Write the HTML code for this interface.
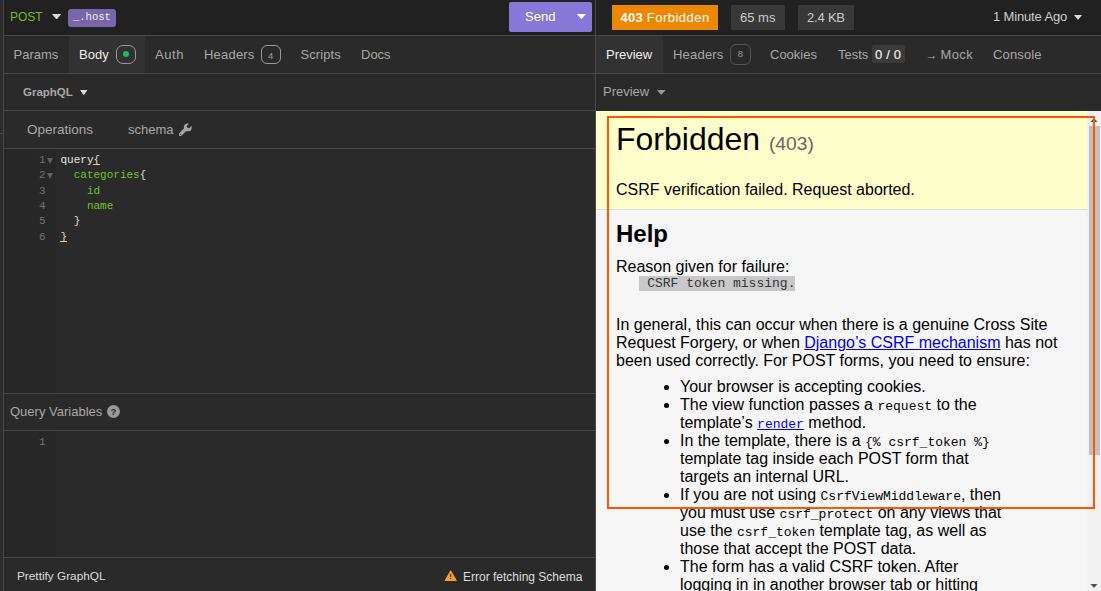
<!DOCTYPE html>
<html><head><meta charset="utf-8">
<style>
*{margin:0;padding:0;box-sizing:border-box}
html,body{width:1101px;height:591px;overflow:hidden;background:#2a2a2a;font-family:"Liberation Sans",sans-serif;}
.a{position:absolute}
.t{position:absolute;white-space:nowrap;line-height:1}
.hl{position:absolute;height:1px;background:#484848}
.vl{position:absolute;width:1px;background:#484848}
.tri{position:absolute;width:0;height:0;border-left:4.5px solid transparent;border-right:4.5px solid transparent;border-top:5px solid #ddd}
.mono{font-family:"Liberation Mono",monospace}

#pv{font-family:"Liberation Sans",sans-serif;color:#000;font-size:16px;line-height:normal}
#pv *{padding:0;margin:0}
#pv>div{padding:10px 20px;border-bottom:1px solid #ddd}
#pv>div *{padding:0}
#pv h1{font-size:32px;font-weight:normal;margin-bottom:.4em;line-height:normal}
#pv h1 span{font-size:60%;color:#666;font-weight:normal}
#pv h2{font-size:24px;font-weight:bold;line-height:normal}
#pv #summary{background:#ffc}
#pv #info{background:#f6f6f6}
#pv #info ul{margin:.5em 4em;list-style:disc}
#pv #info p,#pv #summary p{padding-top:10px}
#pv code,#pv pre{font-family:"Liberation Mono",monospace;font-size:13px}
#pv pre{white-space:pre}
#pv a{color:#0000ee;text-decoration:underline}

.ed{position:absolute;font-family:"Liberation Mono",monospace;font-size:11px;line-height:15.33px;white-space:pre}
.ln{position:absolute;text-align:right;color:#737373;width:20px}
.fold{position:absolute;width:0;height:0;border-left:3.25px solid transparent;border-right:3.25px solid transparent;border-top:6px solid #5f5f5f}
.cw{color:#e6e6e6}.cg{color:#75c12a}.cb{color:#dcdcdc}
</style></head><body>
<!-- left strip -->
<div class="a" style="left:0;top:0;width:3px;height:591px;background:#2c2c2c"></div>
<div class="a" style="left:0;top:133px;width:3px;height:1px;background:#484848"></div>
<div class="vl" style="left:3px;top:0;height:591px"></div>

<!-- LEFT PANE -->
<div class="a" style="left:4px;top:0;width:591px;height:35px;background:#212121"></div>
<div class="t" style="left:10px;top:11px;font-size:12px;color:#75ba24">POST</div>
<svg class="a" style="left:52.1px;top:13.9px;overflow:visible" width="9.2" height="5.2"><path d="M0.6,0 L8.6,0 Q9.2,0 8.899999999999999,0.5 L5.0,4.9 Q4.6,5.2 4.199999999999999,4.9 L0.3,0.5 Q0,0 0.6,0Z" fill="#d8d8d8"/></svg>
<div class="a" style="left:68px;top:9px;width:48px;height:18px;background:#7766aa;border-radius:3px"></div>
<div class="t mono" style="left:73px;top:12px;font-size:10.5px;color:#eee">_.host</div>
<div class="a" style="left:509px;top:2px;width:83px;height:30px;background:#8777d6;border-radius:2px"></div>
<div class="t" style="left:525px;top:10px;font-size:13px;color:#fff">Send</div>
<svg class="a" style="left:576.9px;top:13.95px;overflow:visible" width="8.9" height="5.0"><path d="M0.6,0 L8.3,0 Q8.9,0 8.6,0.5 L4.8500000000000005,4.7 Q4.45,5.0 4.05,4.7 L0.3,0.5 Q0,0 0.6,0Z" fill="#fff"/></svg>
<div class="hl" style="left:4px;top:35px;width:591px"></div>

<!-- tabs -->
<div class="a" style="left:4px;top:36px;width:591px;height:37px;background:#2a2a2a"></div>
<div class="a" style="left:69px;top:36px;width:76px;height:37px;background:#323232"></div>
<div class="t" style="left:13.5px;top:48px;font-size:13px;color:#a8a8a8">Params</div>
<div class="t" style="left:79px;top:48px;font-size:13px;color:#eee">Body</div>
<div class="a" style="left:116px;top:45px;width:20px;height:19px;border:1px solid #999;border-radius:7px"></div>
<div class="a" style="left:123px;top:51px;width:6px;height:6px;background:#1dbf5a;border-radius:50%"></div>
<div class="t" style="left:155px;top:48px;font-size:13px;letter-spacing:0.6px;color:#a8a8a8">Auth</div>
<div class="t" style="left:204px;top:48px;font-size:13px;letter-spacing:0.2px;color:#a8a8a8">Headers</div>
<div class="a" style="left:261px;top:45px;width:20px;height:19px;border:1px solid #999;border-radius:6px"></div>
<div class="t" style="left:268px;top:50.5px;font-size:9.5px;color:#a0a0a0">4</div>
<div class="t" style="left:300.5px;top:48px;font-size:13px;letter-spacing:0.1px;color:#a8a8a8">Scripts</div>
<div class="t" style="left:361px;top:48px;font-size:13px;color:#a8a8a8">Docs</div>
<div class="hl" style="left:4px;top:73px;width:591px"></div>

<!-- graphql row -->
<div class="t" style="left:23px;top:86.5px;font-size:11.5px;font-weight:bold;color:#a8a8a8">GraphQL</div>
<svg class="a" style="left:80px;top:90px;overflow:visible" width="7.4" height="5"><path d="M0.6,0 L6.800000000000001,0 Q7.4,0 7.1000000000000005,0.5 L4.1000000000000005,4.7 Q3.7,5 3.3000000000000003,4.7 L0.3,0.5 Q0,0 0.6,0Z" fill="#e0e0e0"/></svg>
<div class="hl" style="left:4px;top:110px;width:591px"></div>

<!-- operations row -->
<div class="t" style="left:27px;top:123px;font-size:13.5px;color:#a8a8a8">Operations</div>
<div class="t" style="left:128px;top:123px;font-size:13px;color:#a8a8a8">schema</div>
<svg class="a" style="left:177.3px;top:121.7px" width="16" height="16" viewBox="0 0 16 16"><defs><mask id="wm"><rect width="16" height="16" fill="#fff"/><circle cx="11.6" cy="4.4" r="1.7" fill="#000"/><path d="M11.6,4.4 L15,1" stroke="#000" stroke-width="3.4"/></mask></defs><g mask="url(#wm)"><circle cx="10.8" cy="5.4" r="3.9" fill="#a6a6a6"/><path d="M3.2,12.6 L9,6.8" stroke="#a6a6a6" stroke-width="3.4" stroke-linecap="round"/></g><circle cx="3.4" cy="12.4" r="0.6" fill="#444"/></svg>
<div class="hl" style="left:4px;top:148px;width:591px"></div>

<!-- editor -->
<div class="a" style="left:4px;top:149px;width:52px;height:244px;background:#272727"></div>
<!-- code -->
<div class="ed ln" style="left:25.5px;top:153px">1
2
3
4
5
6</div>
<div class="fold" style="left:46.5px;top:158px"></div>
<div class="fold" style="left:46.5px;top:173.4px"></div>
<div class="a" style="left:93px;top:164px;width:7px;height:1px;background:#f2d21a"></div>
<div class="a" style="left:60px;top:241px;width:7px;height:1px;background:#f2d21a"></div>
<div class="ed" style="left:60.5px;top:153px"><span class="cw">query</span><span class="cb">{</span>
<span class="cg">  categories</span><span class="cb">{</span>
<span class="cg">    id</span>
<span class="cg">    name</span>
<span class="cb">  }</span>
<span class="cb">}</span></div>
<div class="hl" style="left:4px;top:393px;width:591px"></div>
<div class="t" style="left:10px;top:405px;font-size:13px;color:#a8a8a8">Query Variables</div>
<div class="a" style="left:106.8px;top:404.6px;width:13.4px;height:13.4px;border-radius:50%;background:#999"></div>
<div class="t" style="left:110.6px;top:406.6px;font-size:9.5px;font-weight:bold;color:#2a2a2a">?</div>
<div class="hl" style="left:4px;top:430px;width:591px"></div>
<div class="a" style="left:4px;top:431px;width:52px;height:126px;background:#272727"></div>
<div class="ed ln" style="left:25.5px;top:435px">1</div>
<div class="hl" style="left:4px;top:557px;width:591px"></div>
<div class="t" style="left:17px;top:570.7px;font-size:11.8px;color:#ddd">Prettify GraphQL</div>
<div class="t" style="left:463px;top:570.7px;font-size:12px;color:#ddd">Error fetching Schema</div>
<svg class="a" style="left:444px;top:570px" width="14" height="12" viewBox="0 0 14 12"><polygon points="6.7,1.0 12.2,10.5 1.2,10.5" fill="#f5a01e" stroke="#f5a01e" stroke-width="1.1" stroke-linejoin="round"/><rect x="6.1" y="3.9" width="1.15" height="3.2" rx="0.5" fill="#2a2a2a"/><rect x="6.1" y="7.8" width="1.15" height="1.15" rx="0.5" fill="#2a2a2a"/></svg>

<div class="vl" style="left:595px;top:0;height:591px"></div>

<!-- RIGHT PANE -->
<div class="a" style="left:596px;top:0;width:505px;height:35px;background:#212121"></div>
<div class="a" style="left:612px;top:5px;width:106px;height:25px;background:#ec8702"></div>
<div class="t" style="left:620.5px;top:11px;font-size:13px;color:#fff"><b style="letter-spacing:0.3px">403</b> <span style="letter-spacing:0.5px">Forbidden</span></div>
<div class="a" style="left:731px;top:5px;width:54px;height:25px;background:#383838"></div>
<div class="t" style="left:740px;top:11px;font-size:13px;color:#ccc">65 ms</div>
<div class="a" style="left:798px;top:5px;width:56px;height:25px;background:#383838"></div>
<div class="t" style="left:807px;top:11px;font-size:13px;letter-spacing:-0.2px;color:#ccc">2.4 KB</div>
<div class="t" style="left:993px;top:10px;font-size:13px;letter-spacing:-0.15px;color:#ccc">1 Minute Ago</div>
<svg class="a" style="left:1074.3px;top:15px;overflow:visible" width="8" height="4.8"><path d="M0.6,0 L7.4,0 Q8,0 7.7,0.5 L4.4,4.5 Q4.0,4.8 3.6,4.5 L0.3,0.5 Q0,0 0.6,0Z" fill="#d8d8d8"/></svg>
<div class="hl" style="left:596px;top:35px;width:505px"></div>

<div class="a" style="left:596px;top:36px;width:67px;height:37px;background:#323232"></div>
<div class="t" style="left:606px;top:48px;font-size:13px;color:#eee">Preview</div>
<div class="t" style="left:673px;top:48px;font-size:13px;letter-spacing:0.2px;color:#a8a8a8">Headers</div>
<div class="a" style="left:730px;top:44px;width:21px;height:21px;border:1px solid #555;border-radius:6px"></div>
<div class="t" style="left:737.8px;top:49.3px;font-size:9.5px;color:#999">8</div>
<div class="t" style="left:770px;top:48px;font-size:13px;color:#a8a8a8">Cookies</div>
<div class="t" style="left:838px;top:48px;font-size:13px;color:#a8a8a8">Tests</div>
<div class="a" style="left:872px;top:45px;width:33px;height:18px;background:#3a3a3a;border-radius:2px"></div>
<div class="t" style="left:875px;top:48px;font-size:13px;-webkit-text-stroke:0.15px #f0f0f0;letter-spacing:0.2px;color:#f0f0f0">0 / 0</div>
<div class="t" style="left:925.5px;top:48.5px;font-size:12px;color:#a8a8a8">→</div>
<div class="t" style="left:940.5px;top:48px;font-size:13px;letter-spacing:0.4px;color:#a8a8a8">Mock</div>
<div class="t" style="left:993px;top:48px;font-size:13px;letter-spacing:0.15px;color:#a8a8a8">Console</div>
<div class="hl" style="left:596px;top:73px;width:505px"></div>
<div class="t" style="left:603px;top:85px;font-size:13px;color:#a8a8a8">Preview</div>
<svg class="a" style="left:656.7px;top:89.5px;overflow:visible" width="8.5" height="4.7"><path d="M0.6,0 L7.9,0 Q8.5,0 8.2,0.5 L4.65,4.4 Q4.25,4.7 3.85,4.4 L0.3,0.5 Q0,0 0.6,0Z" fill="#999"/></svg>

<!-- preview -->
<div class="a" id="pv" style="left:596px;top:111px;width:491px;height:480px;background:#eee;overflow:hidden">
<div id="summary">
<h1>Forbidden <span>(403)</span></h1>
<p>CSRF verification failed. Request aborted.</p>
</div>
<div id="info">
<h2>Help</h2>
<p>Reason given for failure:</p>
<pre>
   <span style="background:#c8c8c8;color:#333"> CSRF token missing.</span>
    </pre>
<p>In general, this can occur when there is a genuine Cross Site Request Forgery, or when <a>Django’s CSRF mechanism</a> has not been used correctly.  For POST forms, you need to ensure:</p>
<ul>
<li>Your browser is accepting cookies.</li>
<li>The view function passes a <code>request</code> to the template’s <a><code>render</code></a> method.</li>
<li>In the template, there is a <code>{% csrf_token %}</code> template tag inside each POST form that targets an internal URL.</li>
<li>If you are not using <code>CsrfViewMiddleware</code>, then you must use <code>csrf_protect</code> on any views that use the <code>csrf_token</code> template tag, as well as those that accept the POST data.</li>
<li>The form has a valid CSRF token. After logging in in another browser tab or hitting the back button after a login, you may need to reload the page with the form, because the token is rotated after a login.</li>
</ul>
</div>
</div>
<div class="a" style="left:1087px;top:111px;width:14px;height:480px;background:#f1f1f1"></div>
<div class="a" style="left:1089px;top:126px;width:11px;height:329px;background:#c1c1c1"></div>
<svg class="a" style="left:1090px;top:117px" width="8" height="6"><polygon points="4,1 7.5,5 0.5,5" fill="#505050"/></svg>
<svg class="a" style="left:1090px;top:583px" width="8" height="6"><polygon points="0.5,1 7.5,1 4,5" fill="#505050"/></svg>
<div class="a" style="left:607px;top:116px;width:488px;height:393px;border:2px solid #ff5500"></div>
</body></html>
